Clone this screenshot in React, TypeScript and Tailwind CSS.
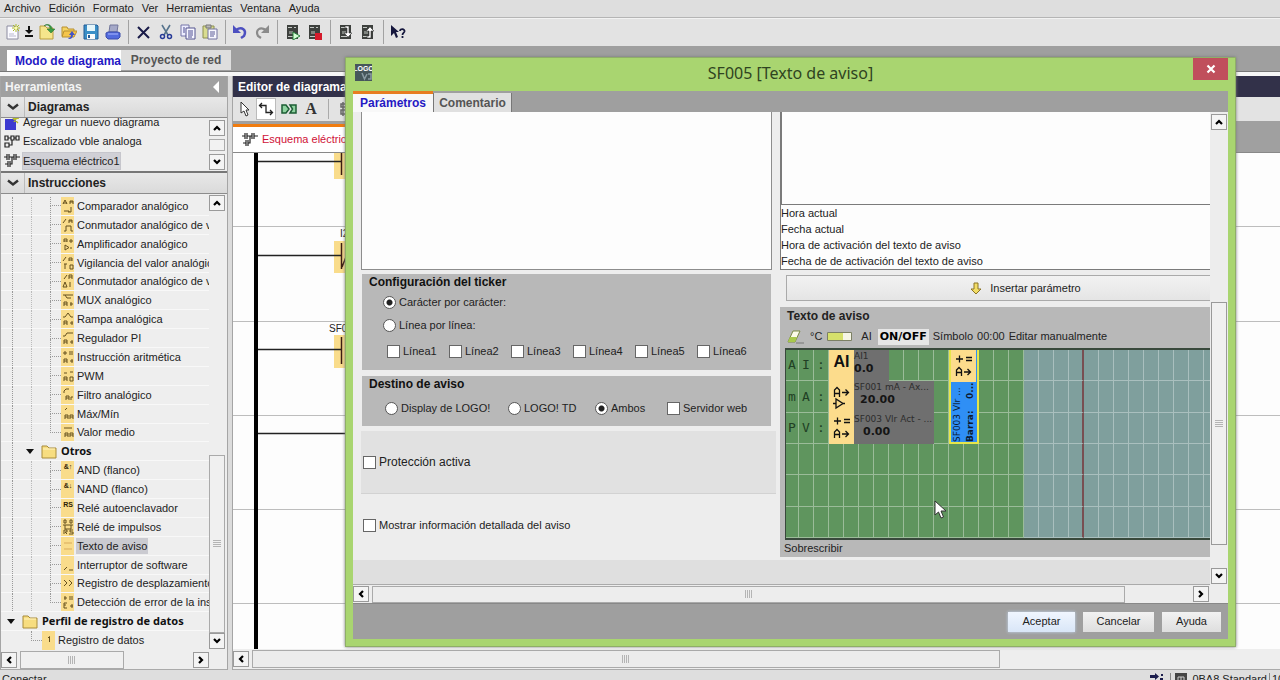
import React from 'react';

type Dir = 'up' | 'down' | 'left' | 'right';

const arrows: Record<Dir, string> = {
  up: 'M2 7 L5 4 L8 7',
  down: 'M2 3 L5 6 L8 3',
  left: 'M7 2 L4 5 L7 8',
  right: 'M3 2 L6 5 L3 8',
};

function ScrollButton({ dir }: { dir: Dir }) {
  return (
    <button
      type="button"
      aria-label={dir}
      className="flex h-4 w-4 shrink-0 items-center justify-center border border-[#9a9a9a] bg-[#f4f4f4]"
    >
      <svg width="10" height="10" viewBox="0 0 10 10" fill="none" stroke="#000" strokeWidth="2.2">
        <path d={arrows[dir]} />
      </svg>
    </button>
  );
}

function Grip({ vertical = false }: { vertical?: boolean }) {
  return (
    <svg width="8" height="8" viewBox="0 0 8 8" stroke="#b4b4b4" strokeWidth="1">
      {vertical ? <path d="M0 .5H8M0 2.5H8M0 4.5H8M0 6.5H8" /> : <path d="M.5 0V8M2.5 0V8M4.5 0V8M6.5 0V8" />}
    </svg>
  );
}

function ToolButton({ label, children }: { label: string; children: React.ReactNode }) {
  return (
    <button type="button" aria-label={label} className="flex h-6 w-[22px] shrink-0 items-center justify-center">
      <svg width="16" height="16" viewBox="0 0 16 16" fill="none">
        {children}
      </svg>
    </button>
  );
}

function Sep({ wide = false }: { wide?: boolean }) {
  return (
    <span className={wide ? 'flex w-[9px] justify-center' : 'flex w-2 justify-center'}>
      <span className="h-6 w-px bg-[#a2a2a2]" />
    </span>
  );
}

function Controller() {
  return (
    <>
      <path d="M2 1H13V15H2Z" fill="#3d403d" />
      <path d="M3 3.5H7M3 12.5H11M9 3.5H11" stroke="#c3c7c3" />
      <path d="M4 7H8V10H4Z" fill="#808580" />
    </>
  );
}

function Toolbar() {
  return (
    <div className="flex h-7 shrink-0 items-start border-t border-[#f2f2f2] bg-[#e3e3e3] pt-px pl-[2px]">
      <ToolButton label="Nuevo">
        <path d="M2 2H10L13 5V15H2Z" fill="#fbfbff" stroke="#8c8ca0" />
        <path d="M4 12H11M4 10H9" stroke="#b9b9cf" />
        <path d="M11 0V8M7 4H15M8 1L14 7M14 1L8 7" stroke="#a9b829" />
        <circle cx="11" cy="4" r="1.5" fill="#fffcae" />
      </ToolButton>
      <button type="button" aria-label="Opciones de nuevo" className="mr-[2px] flex h-6 w-[10px] items-center justify-center">
        <svg width="10" height="12" viewBox="0 0 10 12" fill="#111">
          <path d="M4 0H6V4H9L5 8L1 4H4ZM1 9H9V11H1Z" />
        </svg>
      </button>
      <ToolButton label="Abrir">
        <path d="M1 2H6L8 4H14V15H1Z" fill="#f5e58b" stroke="#b99d3c" />
        <path d="M5 2C8 0 11 1 11 5H8L12 9L16 5H13C13 1 8 -1 5 2Z" fill="#3d9c45" stroke="#1f6d2a" strokeWidth=".5" />
      </ToolButton>
      <ToolButton label="Cerrar">
        <path d="M1 12V3H6L7 5H13V8" fill="#f4d463" stroke="#b88f30" />
        <path d="M1 13L3 7H16L13 13Z" fill="#f5c54c" stroke="#b88f30" />
        <path d="M8 15C11 15 12 13 12 11H14L11 7L8 11H10C10 13 9 14 7 14Z" fill="#4153c9" />
      </ToolButton>
      <ToolButton label="Guardar">
        <path d="M1 1H14L15 2V15H1Z" fill="#3b8fc7" stroke="#235c96" />
        <path d="M4 1H12V7H4Z" fill="#e5f6fb" />
        <path d="M4 10H12V15H4Z" fill="#fafafa" />
        <path d="M5 11H7V14H5Z" fill="#235c96" />
      </ToolButton>
      <ToolButton label="Imprimir">
        <path d="M5 1H13L12 8H4Z" fill="#a5a9c8" stroke="#73779b" />
        <path d="M1 9L3 8H13L15 9V13L13 15H3L1 13Z" fill="#526bdd" stroke="#3b4dac" />
        <path d="M3 10H13" stroke="#a9b7ff" />
      </ToolButton>
      <Sep wide />
      <ToolButton label="Eliminar">
        <path d="M2 3L13 14M13 3L2 14" stroke="#191b48" strokeWidth="2" />
      </ToolButton>
      <ToolButton label="Cortar">
        <path d="M4 1L10 11M12 1L6 11" stroke="#57748d" strokeWidth="1.6" />
        <circle cx="4.5" cy="12.5" r="2" stroke="#273b97" strokeWidth="1.5" />
        <circle cx="11.5" cy="12.5" r="2" stroke="#273b97" strokeWidth="1.5" />
      </ToolButton>
      <ToolButton label="Copiar">
        <path d="M1 1H9V12H1Z" fill="#eef" stroke="#7575a8" />
        <path d="M6 4H15V15H6Z" fill="#f6f6ff" stroke="#55558f" />
        <path d="M3 4H5M3 6H5M3 8H5M8 7H13M8 9H13M8 11H13M8 13H12" stroke="#4d4d91" />
      </ToolButton>
      <ToolButton label="Pegar">
        <path d="M1 2H12V14H1Z" fill="#d9dc90" stroke="#8b8e50" />
        <path d="M4 1H9V4H4Z" fill="#bababa" stroke="#777" />
        <path d="M6 5H15V15H6Z" fill="#f8f8ff" stroke="#7272a0" />
        <path d="M8 8H13M8 10H13M8 12H12" stroke="#5a5a96" />
      </ToolButton>
      <Sep />
      <ToolButton label="Deshacer">
        <path d="M4 6C10 2 15 6 12 12L9 14" stroke="#4d50c0" strokeWidth="2.5" />
        <path d="M1 1L1 9H9Z" fill="#4d50c0" />
      </ToolButton>
      <ToolButton label="Rehacer">
        <path d="M12 6C6 2 1 6 4 12L7 14" stroke="#8b8b8b" strokeWidth="2.2" />
        <path d="M15 1V9H7Z" fill="#8b8b8b" />
      </ToolButton>
      <Sep wide />
      <ToolButton label="Iniciar">
        <Controller />
        <path d="M8 8L15 12L8 16Z" fill="#d7ffd7" stroke="#28803b" />
      </ToolButton>
      <ToolButton label="Detener">
        <Controller />
        <path d="M8 9H15V16H8Z" fill="#d51b2c" />
      </ToolButton>
      <Sep wide />
      <ToolButton label="PC a LOGO">
        <Controller />
        <path d="M7 2H11V9H14L10 13L6 9H9V4H7Z" fill="#fff" stroke="#333" strokeWidth=".6" />
      </ToolButton>
      <ToolButton label="LOGO a PC">
        <Controller />
        <path d="M7 14H11V7H14L10 3L6 7H9V12H7Z" fill="#fff" stroke="#333" strokeWidth=".6" />
      </ToolButton>
      <Sep />
      <ToolButton label="Ayuda contextual">
        <path d="M1 1V12L4 9L6 14L8 13L6 8H9Z" fill="#15173d" />
        <path d="M10 7C10 4.500 15 4.500 14.500 7.500C14 9 12.500 9 12.500 11M12.500 12V14" stroke="#15173d" strokeWidth="1.8" />
      </ToolButton>
    </div>
  );
}

function DiagramIcon() {
  return (
    <svg className="shrink-0" width="16" height="15" viewBox="0 0 16 15" fill="none" stroke="#222" strokeWidth="1.2">
      <path d="M0 4H3M5 4H10M12 4H16M3 1V7M5 1V7M12 1V7M10 1V7M8 4V11H6M6 8V14M4 8V14M1 11H4" />
    </svg>
  );
}

function BlockDiagramIcon() {
  return (
    <svg className="shrink-0" width="16" height="14" viewBox="0 0 16 14" fill="none" stroke="#222" strokeWidth="1.2">
      <path d="M1 1H4V5H1ZM7 1H10V5H7ZM1 8H5V12H1ZM4 3H7M5 10H8V5M10 3H12M12 1H15V5H12Z" />
    </svg>
  );
}

function NewDiagramIcon() {
  return (
    <svg className="shrink-0" width="16" height="16" viewBox="0 0 16 16">
      <path d="M1 4H12V15H1Z" fill="#3d3ad0" />
      <path d="M9 4L15 3M10 7L14 1M8 2L14 8" stroke="#b5ba28" strokeWidth="1.3" />
    </svg>
  );
}

function Folder() {
  return (
    <svg className="shrink-0" width="16" height="15" viewBox="0 0 16 15">
      <path d="M1 2H6L8 4H15V14H1Z" fill="#f7dd80" stroke="#a98c3b" />
      <path d="M2 5H14" stroke="#fff3bf" />
    </svg>
  );
}

type Item = { label: string; glyph?: string; mark?: string; selected?: boolean };

const analog: Item[] = [
  { label: 'Comparador analógico', glyph: 'M1 6L3 2L5 6M1 5H5M8 6V3H11V6M8 4H11M2 13H7V14M9 9V14H6' },
  { label: 'Conmutador analógico de valor umbral', glyph: 'M1 6L4 2M7 6V3H10V6M7 4H10M2 14H4V9H9V14H11' },
  { label: 'Amplificador analógico', glyph: 'M2 6V3H5V6M2 5H5M7 5H11M9 3V7M3 9V14L7 11.500ZM8 12H10' },
  { label: 'Vigilancia del valor analógico', glyph: 'M1 6L4 2M7 6V3H10V6M7 5H10M2 9H5M3 9V14M8 10H11V14H8Z' },
  { label: 'Conmutador analógico de valor umbral diferencial', glyph: 'M2 6L5 2M7 6V2H10V6M7 4H10M1 14L3 9L5 14H1M8 9V14' },
  { label: 'MUX analógico', glyph: 'M1 3H11M3 3L5 6H9M2 14V10H5V14M2 12H5M8 12H11M9 10V14' },
  { label: 'Rampa analógica', glyph: 'M1 6H3L6 2L9 6H11M2 14V10H5V14M2 12H5M8 12H11M10 10V14' },
  { label: 'Regulador PI', glyph: 'M1 6H3L5 3H11M2 14V10H5V14M2 12H5M8 12H11M10 10V14' },
  { label: 'Instrucción aritmética', glyph: 'M1 4H5M3 2V6M7 3H11M7 5H11M2 14V10H5V14M2 12H5M8 12H11M10 10V14' },
  { label: 'PWM', glyph: 'M2 5H5M8 4H11M2 13V9H5V13M2 11H5M8 13V9H11V13H8' },
  { label: 'Filtro analógico', glyph: 'M2 6V4L4 2H7M4 13V9H7V13M4 11H7M9 13V10H11' },
  { label: 'Máx/Mín', glyph: 'M3 4L5 2M3 13V9H6V13M3 11H6M8 13V9H11V13M8 11H11' },
  { label: 'Valor medio', glyph: 'M2 4H10M3 13V9H6V13M3 11H6M8 13V9H11V13M8 11H11' },
];

const others: Item[] = [
  { label: 'AND (flanco)', mark: '&↑' },
  { label: 'NAND (flanco)', mark: '&↓' },
  { label: 'Relé autoenclavador', mark: 'RS' },
  { label: 'Relé de impulsos', glyph: 'M2 1H4V4H2ZM8 1H10V4H8ZM1 6H11M3 6V10H9V6M2 15V11H5V13L3 13L5 15M11 11H8V13H11V15H7' },
  { label: 'Texto de aviso', glyph: 'M2 5H10M2 11H10', selected: true },
  { label: 'Interruptor de software', glyph: 'M2 13L5 10M7 13H11' },
  { label: 'Registro de desplazamiento', glyph: 'M2 5L5 8L2 11M7 5L10 8L7 11' },
  { label: 'Detección de error de la instrucción', glyph: 'M2 4H5M3 2V6M7 3H11M7 5H11M5 9H2V14H5M2 11H4M8 12H11M10 10V14' },
];

function Leaf({ item, last }: { item: Item; last: boolean }) {
  return (
    <li className="flex min-h-0 items-center border-b border-[#f8f8f8]">
      <span className="ml-[11px] h-full w-[19px] shrink-0 border-l border-dotted border-[#999]" />
      <span className="h-full w-[19px] shrink-0 border-l border-dotted border-[#bbb]" />
      <span className="flex h-full w-[11px] shrink-0 flex-col">
        <span className="flex-1 border-b border-l border-dotted border-[#999]" />
        <span className={last ? 'flex-1' : 'flex-1 border-l border-dotted border-[#999]'} />
      </span>
      <span className="flex h-full w-[13px] shrink-0 items-center justify-center bg-[#f9dc8b]">
        <svg
          width="12"
          height="16"
          viewBox="0 0 12 16"
          fill="none"
          stroke={item.selected ? '#d9ab5c' : '#65501e'}
        >
          {item.glyph && <path d={item.glyph} />}
          {item.mark && (
            <text x="6" y="7" fontSize="7" fontWeight="bold" textAnchor="middle" fill="#2e2206" stroke="none">
              {item.mark}
            </text>
          )}
        </svg>
      </span>
      <button
        type="button"
        className={
          item.selected
            ? 'ml-[2px] h-4 bg-[#cbcbd1] px-[1px] leading-4 whitespace-nowrap'
            : 'ml-[2px] h-4 px-[1px] leading-4 whitespace-nowrap'
        }
      >
        {item.label}
      </button>
    </li>
  );
}

function Triangle() {
  return (
    <svg className="shrink-0" width="8" height="5" viewBox="0 0 8 5">
      <path d="M0 0H8L4 5Z" fill="#111" />
    </svg>
  );
}

function SectionHeader({ title }: { title: string }) {
  return (
    <button
      type="button"
      className="flex h-full w-full items-stretch border-b border-[#8c8c8c] bg-gradient-to-b from-[#e8e8e8] to-[#dadada] text-left text-xs font-bold text-[#222]"
    >
      <span className="flex w-6 items-center justify-center border-r border-[#bbb]">
        <svg width="12" height="8" viewBox="0 0 12 8" fill="none" stroke="#333" strokeWidth="2.4">
          <path d="M1 1.500L6 5.500L11 1.500" />
        </svg>
      </span>
      <span className="flex items-center pl-[3px]">{title}</span>
    </button>
  );
}

function Sidebar() {
  return (
    <aside className="flex w-[228px] shrink-0 flex-col border-r border-l border-[#a5a5a5] bg-[#eee] text-[11px] text-[#222]">
      <div className="flex h-[21px] shrink-0 items-center justify-between bg-[#a0a0a0] px-1 text-xs font-bold text-[#f4f4f4]">
        <h2>Herramientas</h2>
        <button type="button" aria-label="Ocultar herramientas" className="mr-1">
          <svg width="6" height="12" viewBox="0 0 6 12">
            <path d="M6 0V12L0 6Z" fill="#fff" />
          </svg>
        </button>
      </div>
      <div className="h-[21px] shrink-0">
        <SectionHeader title="Diagramas" />
      </div>
      <div className="flex h-[53px] shrink-0 overflow-hidden">
        <ul className="flex flex-1 flex-col justify-end overflow-hidden pb-px">
          <li className="flex h-[19px] shrink-0 items-center gap-[3px] pl-[3px]">
            <NewDiagramIcon />
            <a href="#nuevo">Agregar un nuevo diagrama</a>
          </li>
          <li className="flex h-[19px] shrink-0 items-center gap-[3px] pl-[3px]">
            <BlockDiagramIcon />
            <a href="#escalizado">Escalizado vble analoga</a>
          </li>
          <li className="flex h-[19px] shrink-0 items-center gap-[2px] pl-[3px]">
            <DiagramIcon />
            <a href="#esquema" className="border border-[#c6c6cc] bg-[#d0d0d6] leading-4">
              Esquema eléctrico1
            </a>
          </li>
        </ul>
        <div className="flex w-[18px] flex-col items-start justify-between pt-[2px] pb-[1px]">
          <ScrollButton dir="up" />
          <span className="h-3 w-4 border border-[#aaa] bg-[#f2f2f2]" />
          <ScrollButton dir="down" />
        </div>
      </div>
      <div className="h-[23px] shrink-0 border-t-2 border-[#777]">
        <SectionHeader title="Instrucciones" />
      </div>
      <div className="flex min-h-0 flex-1">
        <ul className="mt-[3px] grid min-w-0 flex-1 auto-rows-fr overflow-hidden">
          {analog.map((item, i) => (
            <Leaf key={i} item={item} last={i === analog.length - 1} />
          ))}
          <li className="flex min-h-0 items-center border-b border-[#f8f8f8]">
            <span className="ml-[11px] h-full w-[14px] shrink-0 border-l border-dotted border-[#999]" />
            <Triangle />
            <span className="ml-[7px] flex items-center gap-1">
              <Folder />
              <span className="font-bold text-[#111] [font-family:'Noto_Sans',sans-serif]">Otros</span>
            </span>
          </li>
          {others.map((item, i) => (
            <Leaf key={i} item={item} last={i === others.length - 1} />
          ))}
          <li className="flex min-h-0 items-center border-b border-[#f8f8f8] pl-[6px]">
            <Triangle />
            <span className="ml-[7px] flex items-center gap-1">
              <Folder />
              <span className="font-bold whitespace-nowrap text-[#111] [font-family:'Noto_Sans',sans-serif]">
                Perfil de registro de datos
              </span>
            </span>
          </li>
          <li className="flex min-h-0 items-center">
            <span className="ml-[30px] flex h-full w-[11px] shrink-0 flex-col">
              <span className="flex-1 border-b border-l border-dotted border-[#999]" />
              <span className="flex-1" />
            </span>
            <span className="flex h-full w-[13px] items-center justify-center bg-[#f9dc8b]">
              <svg width="12" height="16" viewBox="0 0 12 16" fill="none" stroke="#65501e">
                <path d="M5 5L6.500 3.500V9" />
              </svg>
            </span>
            <span className="ml-[3px] whitespace-nowrap">Registro de datos</span>
          </li>
        </ul>
        <div className="flex w-[18px] flex-col items-start pt-[1px] pb-[1px]">
          <ScrollButton dir="up" />
          <span className="flex-1" />
          <span className="flex h-[178px] w-4 items-center justify-center border border-[#aaa] bg-[#f0f0f0]">
            <Grip vertical />
          </span>
          <ScrollButton dir="down" />
        </div>
      </div>
      <div className="flex h-5 shrink-0 items-center border-b border-[#aaa] pr-[18px]">
        <ScrollButton dir="left" />
        <span className="ml-[3px] flex h-[18px] w-[104px] items-center justify-center border border-[#aaa] bg-[#f0f0f0]">
          <Grip />
        </span>
        <span className="flex-1" />
        <ScrollButton dir="right" />
      </div>
    </aside>
  );
}

function Canvas() {
  return (
    <div className="min-h-0 flex-1 overflow-hidden bg-[#fdfdfd]">
      <svg className="block h-full w-full" role="img" aria-label="Esquema eléctrico">
        <path d="M0 73.500H3000M0 168.500H3000M0 262.500H3000M0 356.500H3000M0 450.500H3000" stroke="#bdbdbd" />
        <path d="M101 -1H120V26H101ZM101 88H120V120H101ZM101 182H120V215H101Z" fill="#f9dc8b" />
        <path d="M24 8.500H108M24 102.500H108M24 196.500H108M24 280.500H400" stroke="#222" strokeWidth="1.300" />
        <path d="M108.500 0V22M108.500 90V116M109 114L113 104M108.500 184V211" stroke="#3b1d12" strokeWidth="1.500" />
        <rect x="21" y="0" width="4" height="497" fill="#000" />
        <text x="107" y="84" fontSize="10" fill="#222">
          I2
        </text>
        <text x="96" y="179" fontSize="10" fill="#222">
          SF001
        </text>
      </svg>
    </div>
  );
}

function Editor() {
  return (
    <section className="flex min-w-0 flex-1 flex-col border-l border-[#a5a5a5] bg-[#e3e3e3]">
      <h2 className="flex h-[21px] shrink-0 items-center bg-[#323149] pl-[5px] text-xs font-bold text-white">
        Editor de diagramas
      </h2>
      <div className="flex h-6 shrink-0 items-center pl-[1px]">
        <ToolButton label="Seleccionar">
          <path d="M4 1V12L7 10L9 15L11 14L9 9H12Z" fill="#fff" stroke="#333" />
        </ToolButton>
        <span className="mr-[2px] border border-[#bbb] bg-white">
          <button type="button" aria-label="Conector" className="flex h-5 w-[18px] items-center justify-center">
            <svg width="16" height="14" viewBox="0 0 16 14" fill="none" stroke="#222" strokeWidth="1.300">
              <path d="M4 1L1.500 3.500L4 6M2 3.500H8V10.500H14M12 8L14.500 10.500L12 13" />
            </svg>
          </button>
        </span>
        <ToolButton label="Constantes">
          <path d="M1 4H5L8 8L5 12H1Z" fill="#8fd3a0" stroke="#1d5d35" strokeWidth="1.500" />
          <path d="M9 4H15V12H9L11.500 8Z" fill="#8fd3a0" stroke="#1d5d35" strokeWidth="1.500" />
        </ToolButton>
        <button
          type="button"
          aria-label="Insertar comentario"
          className="flex h-6 w-[22px] items-center justify-center text-base leading-6 font-bold text-[#333] [font-family:'Liberation_Serif',serif]"
        >
          A
        </button>
        <span className="ml-[6px] h-5 w-px bg-[#aaa]" />
        <span className="ml-[6px]">
          <ToolButton label="Alinear">
            <path d="M5 1V15M3 3H12V6H3ZM3 9H10V13H3Z" stroke="#666" strokeWidth="1.500" />
          </ToolButton>
        </span>
      </div>
      <div className="flex h-8 shrink-0 border-b border-[#888] bg-[#a0a0a0] pt-[3px]">
        <div className="flex w-[150px] items-center border-t-[3px] border-[#f07c10] bg-white pl-[9px] text-[11px] text-[#cf1237]">
          <DiagramIcon />
          <span className="ml-1 whitespace-nowrap">Esquema eléctrico1</span>
        </div>
      </div>
      <Canvas />
      <div className="flex h-[21px] shrink-0 items-center border-b border-[#aaa] bg-[#eee] pr-5">
        <ScrollButton dir="left" />
        <span className="ml-[3px] flex h-[18px] w-[748px] items-center justify-center border border-[#aaa] bg-[#ececec]">
          <Grip />
        </span>
      </div>
    </section>
  );
}

function Check({ label, big = false }: { label: string; big?: boolean }) {
  return (
    <label className={big ? 'flex items-center gap-[3px] text-xs' : 'flex items-center gap-[3px]'}>
      <input
        type="checkbox"
        className="h-[13px] w-[13px] shrink-0 appearance-none border border-[#666] bg-white checked:bg-[#333]"
      />
      <span className="whitespace-nowrap">{label}</span>
    </label>
  );
}

function Radio({ label, name, checked = false }: { label: string; name: string; checked?: boolean }) {
  return (
    <label className="flex items-center gap-[3px]">
      <input
        type="radio"
        name={name}
        defaultChecked={checked}
        className="h-[13px] w-[13px] shrink-0 appearance-none rounded-full border border-[#555] bg-white checked:bg-[radial-gradient(circle,#222_0,#222_2.5px,#fff_3.500px)]"
      />
      <span className="whitespace-nowrap">{label}</span>
    </label>
  );
}

const lineChecks = ['Línea1', 'Línea2', 'Línea3', 'Línea4', 'Línea5', 'Línea6'];

function LeftColumn() {
  return (
    <div className="flex w-[423px] shrink-0 flex-col text-[11px] text-[#222]">
      <div className="ml-2 h-[158px] w-[411px] border border-t-0 border-[#8d8d8d] bg-[#fdfdfd]" />
      <fieldset className="mt-1 ml-[9px] flex h-[96px] w-[409px] flex-col bg-[#b8b8b8] pl-[7px]">
        <h3 className="text-xs leading-[17px] font-bold text-[#111]">Configuración del ticker</h3>
        <div className="mt-[3px] ml-[14px] flex h-4">
          <Radio name="ticker" label="Carácter por carácter:" checked />
        </div>
        <div className="mt-[7px] ml-[14px] flex h-4">
          <Radio name="ticker" label="Línea por línea:" />
        </div>
        <div className="mt-[10px] ml-[18px] grid h-4 grid-cols-[repeat(6,62px)]">
          {lineChecks.map((l) => (
            <Check key={l} label={l} />
          ))}
        </div>
      </fieldset>
      <fieldset className="mt-[6px] ml-[9px] flex h-[50px] w-[409px] flex-col bg-[#b8b8b8] pl-[7px]">
        <h3 className="text-xs leading-[17px] font-bold text-[#111]">Destino de aviso</h3>
        <div className="mt-[7px] ml-4 grid h-4 grid-cols-[123px_87px_72px_auto]">
          <Radio name="destino" label="Display de LOGO!" />
          <Radio name="destino" label="LOGO! TD" />
          <Radio name="destino" label="Ambos" checked />
          <Check label="Servidor web" />
        </div>
      </fieldset>
      <div className="mt-[5px] ml-2 flex h-[63px] items-center border-b border-[#d2d2d2] bg-[#e1e1e1] pl-[2px]">
        <Check label="Protección activa" big />
      </div>
      <div className="flex h-[62px] items-center pl-[10px]">
        <Check label="Mostrar información detallada del aviso" />
      </div>
    </div>
  );
}

const rowLetters = [
  ['A', 'I', ':'],
  ['m', 'A', ':'],
  ['P', 'V', ':'],
];

function BlockIcon({ kind }: { kind: 'amp' | 'math' }) {
  return (
    <span className="flex w-[25px] shrink-0 items-center justify-center bg-[#fcdc8c]">
      <svg width="20" height="28" viewBox="0 0 20 28" fill="none" stroke="#111" strokeWidth="1.300">
        {kind === 'math' ? (
          <path d="M2 7H9M5.500 3.500V10.500M12 5.500H18M12 8.500H18" />
        ) : (
          <path d="M4 16V25L11 20.500ZM1 20.500H4M11 20.500H13" />
        )}
        <path
          d={
            kind === 'math'
              ? 'M2.500 24V18L5 15.500L7.500 18V24M2.500 20.500H7.500M10 20H16M13.500 17L16.500 20L13.500 23'
              : 'M2.500 14V7L5 4.500L7.500 7V14M2.500 10.500H7.500M10 9.500H16M13.500 6.500L16.500 9.500L13.500 12.500'
          }
        />
      </svg>
    </span>
  );
}

const paramBold = "text-[11px] leading-3 font-bold text-[#151515] [font-family:'DejaVu_Sans',sans-serif]";
const paramName = "text-[9px] leading-[13px] whitespace-nowrap text-[#2d2d2d] [font-family:'DejaVu_Sans',sans-serif]";

function Display() {
  const cells = [];
  for (let r = 0; r < 6; r++) {
    for (let c = 0; c < 29; c++) {
      const blue = c >= 16;
      const base = blue ? 'bg-[#7f9f9d] border-[#a9bfbe]' : 'bg-[#5f955e] border-[#9bbc99]';
      const edge = c === 19 ? 'border-r-2 border-r-[#784f52]' : 'border-r';
      cells.push(
        <span
          key={`${r}-${c}`}
          className={`flex items-center justify-center border-b text-[13px] text-[#213f24] ${base} ${edge}`}
          style={{ gridRow: r + 1, gridColumn: c + 1 }}
        >
          {rowLetters[r]?.[c] ?? ''}
        </span>,
      );
    }
  }
  return (
    <div className="ml-[5px] grid h-48 shrink-0 grid-cols-[13px_repeat(28,15px)] grid-rows-6 overflow-hidden border-t-2 border-b-2 border-l border-[#39493c] [font-family:'DejaVu_Sans_Mono',monospace]">
      {cells}
      <div className="col-start-4 col-end-8 row-start-1 flex overflow-hidden bg-[#6f6f6f]">
        <span className="flex w-[25px] shrink-0 justify-center bg-[#fcdc8c] pt-1 text-base leading-4 font-bold text-[#111] [font-family:'Liberation_Sans',sans-serif]">
          AI
        </span>
        <span className="flex flex-col">
          <span className={paramName}>AI1</span>
          <span className={paramBold}>0.0</span>
        </span>
      </div>
      <div className="col-start-4 col-end-11 row-start-2 flex overflow-hidden bg-[#6f6f6f]">
        <BlockIcon kind="amp" />
        <span className="flex flex-col">
          <span className={paramName}>SF001 mA - Ax...</span>
          <span className={`${paramBold} pl-[6px]`}>20.00</span>
        </span>
      </div>
      <div className="col-start-4 col-end-11 row-start-3 flex overflow-hidden bg-[#6f6f6f]">
        <BlockIcon kind="math" />
        <span className="flex flex-col">
          <span className={paramName}>SF003 Vlr Act - ...</span>
          <span className={`${paramBold} pl-[9px]`}>0.00</span>
        </span>
      </div>
      <div className="col-start-12 col-end-14 row-start-1 row-end-4 flex flex-col border-2 border-t-0 border-[#e6e64a] bg-[#2f8ff5]">
        <span className="flex h-8 shrink-0">
          <BlockIcon kind="math" />
        </span>
        <span className="flex min-h-0 flex-1 rotate-180 flex-col-reverse text-[9px] leading-[13px] whitespace-nowrap text-[#0b1a33] [font-family:'DejaVu_Sans',sans-serif] [writing-mode:vertical-rl]">
          <span className="flex justify-between font-bold">
            <span>Barra:</span>
            <span>0...</span>
          </span>
          <span>SF003 Vlr ...</span>
        </span>
      </div>
    </div>
  );
}

const params = [
  'Hora actual',
  'Fecha actual',
  'Hora de activación del texto de aviso',
  'Fecha de de activación del texto de aviso',
];

function RightColumn() {
  return (
    <div className="ml-1 flex min-w-0 flex-1 flex-col overflow-hidden text-[11px] text-[#222]">
      <div className="h-[93px] shrink-0 border-b border-l-2 border-[#7b7b7b] bg-[#fdfdfd]" />
      <ul className="h-[65px] shrink-0 border-b border-l border-[#7b7b7b] bg-[#fdfdfd]">
        {params.map((p) => (
          <li key={p} className="h-4 leading-4">
            {p}
          </li>
        ))}
      </ul>
      <button
        type="button"
        className="mt-[5px] ml-[6px] flex h-[26px] shrink-0 items-center justify-center gap-2 border border-r-0 border-[#aaa] bg-gradient-to-b from-[#f2f2f2] to-[#e5e5e5] pl-[54px]"
      >
        <svg width="12" height="13" viewBox="0 0 12 13">
          <path d="M4 1H8V7H11L6 12L1 7H4Z" fill="#f2dd66" stroke="#8b7426" />
        </svg>
        Insertar parámetro
      </button>
      <section className="mt-[6px] flex h-[250px] shrink-0 flex-col bg-[#b8b8b8]">
        <h3 className="pl-[7px] text-xs leading-[18px] font-bold text-[#222]">Texto de aviso</h3>
        <div className="mt-[2px] mb-[2px] flex h-[19px] shrink-0 items-center pl-[7px]">
          <button type="button" aria-label="Borrar" className="mr-[6px]">
            <svg width="17" height="14" viewBox="0 0 17 14">
              <path d="M6 1H13L8 12H1Z" fill="#fbfbe8" stroke="#7b8b45" />
              <path d="M3 7H10L8 12H1Z" fill="#a9c94c" />
              <path d="M9 13H17" stroke="#777" />
            </svg>
          </button>
          <button type="button" className="mr-[5px] whitespace-nowrap">
            °C
          </button>
          <button type="button" aria-label="Gráfico de barras" className="mr-[9px]">
            <svg width="25" height="9" viewBox="0 0 25 9">
              <path d="M.5 .5H24.500V8.500H.5Z" fill="#f6f6e6" stroke="#7c8064" />
              <path d="M1 1H16V8H1Z" fill="#d6e06b" />
            </svg>
          </button>
          <button type="button" className="mr-[6px]">
            AI
          </button>
          <button
            type="button"
            className="mr-1 h-4 w-[51px] bg-[#e6e6e6] text-center text-[11px] leading-4 font-bold text-black [font-family:'DejaVu_Sans',sans-serif]"
          >
            ON/OFF
          </button>
          <button type="button" className="mr-1">
            Símbolo
          </button>
          <button type="button" className="mr-1">
            00:00
          </button>
          <button type="button" className="whitespace-nowrap">
            Editar manualmente
          </button>
        </div>
        <Display />
        <p className="pl-1 leading-4">Sobrescribir</p>
      </section>
    </div>
  );
}

function Dialog() {
  return (
    <div
      role="dialog"
      aria-label="SF005 [Texto de aviso]"
      className="absolute top-[57px] right-[44px] bottom-[33px] left-[345px] flex flex-col border border-[#8fae68] bg-[#a9d570] px-[7px] pb-[7px] shadow-[0_0_3px_#777]"
    >
      <div className="grid h-[33px] shrink-0 grid-cols-[1fr_auto_1fr] items-start">
        <svg className="mt-[6px] ml-[2px]" width="17" height="17" viewBox="0 0 17 17">
          <rect width="17" height="17" fill="#46565b" />
          <text x="8.500" y="7" fontSize="7" fontWeight="bold" textAnchor="middle" fill="#fff" textRendering="geometricPrecision">
            LOGO
          </text>
          <path d="M7 9L9.500 15L12 10M13 10H16V15H13" fill="none" stroke="#8a9aa2" strokeWidth="1.500" />
        </svg>
        <h1 className="pt-[3px] text-base leading-6 text-[#2f4421] [font-family:'Noto_Sans',sans-serif]">
          SF005 [Texto de aviso]
        </h1>
        <button
          type="button"
          aria-label="Cerrar ventana"
          className="flex h-[22px] w-[35px] items-center justify-center justify-self-end bg-[#c04f5c]"
        >
          <svg width="10" height="10" viewBox="0 0 10 10" stroke="#fff" strokeWidth="2.200">
            <path d="M1.500 1.500L8.500 8.500M8.500 1.500L1.500 8.500" />
          </svg>
        </button>
      </div>
      <div className="flex min-h-0 flex-1 flex-col bg-[#ededed]">
        <div role="tablist" className="flex h-[21px] shrink-0 bg-[#9f9f9f] text-xs font-bold">
          <button role="tab" aria-selected="true" type="button" className="w-20 border-t-[3px] border-[#e77d20] bg-[#f8f8f8] text-[#2418c4]">
            Parámetros
          </button>
          <button role="tab" aria-selected="false" type="button" className="mt-[2px] w-[79px] border-r border-l border-[#777] bg-[#e0e0e0] text-[#555]">
            Comentario
          </button>
        </div>
        <div className="flex min-h-0 flex-1">
          <div className="flex min-w-0 flex-1 flex-col">
            <div className="flex min-h-0 flex-1">
              <LeftColumn />
              <RightColumn />
            </div>
            <div className="h-[25px] shrink-0 border-b border-[#aaa] bg-[#dfdfdf]" />
            <div className="flex h-[18px] shrink-0 items-center pr-[1px]">
              <ScrollButton dir="left" />
              <span className="ml-[3px] flex h-[17px] w-[753px] items-center justify-center border border-[#aaa] bg-[#ededed]">
                <Grip />
              </span>
              <span className="flex-1" />
              <ScrollButton dir="right" />
            </div>
          </div>
          <div className="flex w-[18px] flex-col items-start pt-[2px] pb-[19px] pl-px">
            <ScrollButton dir="up" />
            <span className="h-[172px]" />
            <span className="flex h-[243px] w-4 items-center justify-center border border-[#999] bg-[#f0f0f0]">
              <Grip vertical />
            </span>
            <span className="flex-1" />
            <ScrollButton dir="down" />
          </div>
        </div>
        <div className="flex h-9 shrink-0 items-center justify-end gap-2 border-t border-[#888] bg-[#9f9f9f] pr-[7px] text-[11px] text-[#222]">
          <button
            type="button"
            className="h-5 w-[67px] bg-gradient-to-b from-[#f0f6ff] to-[#d9e6f7] shadow-[0_0_3px_#c4d8f0]"
          >
            Aceptar
          </button>
          <button type="button" className="h-5 w-[71px] bg-gradient-to-b from-[#f2f2f2] to-[#dedede]">
            Cancelar
          </button>
          <button type="button" className="h-5 w-[59px] bg-gradient-to-b from-[#f2f2f2] to-[#dedede]">
            Ayuda
          </button>
        </div>
      </div>
      <svg className="absolute top-[442px] left-[588px]" width="13" height="19" viewBox="0 0 13 19">
        <path d="M1 1V15L4.500 12L7 18L9.500 17L7 11H12Z" fill="#fff" stroke="#333" />
      </svg>
    </div>
  );
}

const menus = ['Archivo', 'Edición', 'Formato', 'Ver', 'Herramientas', 'Ventana', 'Ayuda'];

export default function App() {
  return (
    <div className="relative flex h-screen flex-col overflow-hidden bg-[#dedede] [font-family:'Liberation_Sans',sans-serif]">
      <nav className="flex h-[18px] shrink-0 items-center gap-2 border-b border-[#b5b5b5] bg-[#dedede] pl-1 text-[11px] text-[#222]">
        {menus.map((m) => (
          <button type="button" key={m}>
            {m}
          </button>
        ))}
      </nav>
      <Toolbar />
      <div className="flex h-[26px] shrink-0 items-end border-b border-[#777] bg-[#9f9f9f] pl-[7px] text-xs font-bold">
        <button type="button" className="h-[21px] w-[114px] bg-white pl-2 text-left whitespace-nowrap text-[#2418c4]">
          Modo de diagrama
        </button>
        <button type="button" className="mb-[1px] h-5 w-[110px] bg-[#dedede] text-[#555]">
          Proyecto de red
        </button>
      </div>
      <div className="flex min-h-0 flex-1 gap-1 border-t-4 border-[#f6f6f6] bg-[#dcdcdc]">
        <Sidebar />
        <Editor />
      </div>
      <footer className="flex h-[10px] shrink-0 items-start justify-between pt-[3px] pl-[2px] text-[11px] leading-3 whitespace-nowrap text-[#222]">
        <span>Conectar</span>
        <span className="flex items-start">
          <svg width="16" height="12" viewBox="0 0 16 12" fill="#1b1d4c">
            <path d="M0 2H5V0L9 3.500L5 7V5H0ZM10 5H13V12H10ZM11 1H13V3H11Z" />
          </svg>
          <span className="mx-1 h-3 w-px bg-[#888]" />
          <svg width="13" height="12" viewBox="0 0 13 12">
            <path d="M0 0H12V12H0Z" fill="#444" />
            <path d="M3 9V4H9V9M6 4V9" stroke="#ccc" fill="none" />
          </svg>
          <span className="ml-1">0BA8 Standard</span>
          <span className="mx-[2px] h-3 w-px bg-[#888]" />
          <span className="w-2 overflow-hidden">100%</span>
        </span>
      </footer>
      <Dialog />
    </div>
  );
}
